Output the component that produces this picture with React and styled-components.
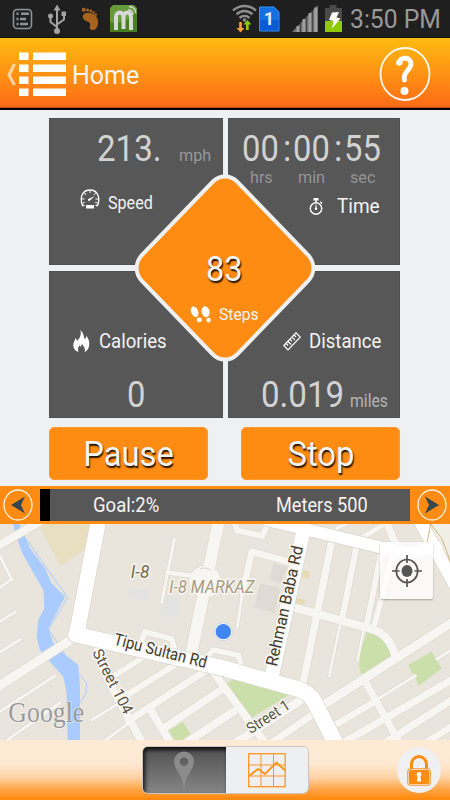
import React from 'react';
import styled, { createGlobalStyle, css } from 'styled-components';

const GlobalStyle = createGlobalStyle`
  * {
    box-sizing: border-box;
  }

  body {
    margin: 0;
    background: #eff0f2;
    overflow: hidden;
  }

  svg {
    display: block;
    flex: none;
  }
`;

const Screen = styled.div`
  width: 450px;
  height: 800px;
  display: flex;
  flex-direction: column;
  overflow: hidden;
  background: #eff0f2;
  font-family: Roboto, 'Liberation Sans', sans-serif;
`;

// Text in a box of known width, squeezed a little like the device font
const Label = styled.span`
  display: block;
  flex: none;
  width: ${p => p.$w}px;
  margin-left: ${p => p.$ml || 0}px;
  padding-top: ${p => p.$pt || 0}px;
  font-size: ${p => p.$size}px;
  color: ${p => p.$color || '#f4f4f4'};
  white-space: nowrap;
  transform: scaleX(${p => p.$sx || 0.95});
  transform-origin: left center;
  ${p => p.$shadow && css`
    text-shadow: 1px 2px 1.5px rgba(0, 0, 0, 0.9);
  `}
`;

const Row = styled.div`
  display: flex;
  align-items: ${p => p.$align || 'center'};
  height: ${p => p.$h}px;
  line-height: ${p => p.$h}px;
  margin-top: ${p => p.$mt || 0}px;
  padding-left: ${p => p.$pl || 0}px;
`;

const StatusBar = styled.div`
  height: 38px;
  flex: none;
  display: flex;
  align-items: center;
  justify-content: space-between;
  background: #1f1f1f;
  border-bottom: 1px solid #111;
  padding: 0 7px 0 12px;
`;

const StatusSide = styled.div`
  display: flex;
  align-items: center;
  line-height: 38px;
`;

const Header = styled.header`
  height: 72px;
  flex: none;
  display: flex;
  align-items: center;
  justify-content: space-between;
  padding: 1px 18px 0 6px;
  background: linear-gradient(#febb12, #fe6a16);
  border-bottom: 2px solid #000;
  box-shadow: inset 0 -1px 0 #c24e0d;
`;

const HeaderLeft = styled.div`
  display: flex;
  align-items: center;
  line-height: 32px;
`;

const Main = styled.main`
  flex: none;
  height: 376px;
  padding: 8px 50px 0 49px;
  background: #eff0f2;
`;

const Panel = styled.section`
  position: relative;
  height: 300px;
  display: grid;
  grid-template-columns: 174px 172px;
  grid-template-rows: 147px 147px;
  gap: 6px 5px;
`;

const Cell = styled.div`
  background: #575757;
  box-shadow: inset 0 0 0 1px #505050;
`;

const Diamond = styled.div`
  position: absolute;
  left: 50%;
  top: 50%;
  width: 144px;
  height: 144px;
  margin: -72px 0 0 -72px;
  background: #ff8c12;
  border: 4.5px solid #eff0f2;
  border-radius: 20px;
  transform: scaleX(0.965) rotate(45deg);
`;

const Steps = styled.div`
  position: absolute;
  left: 89px;
  top: 60px;
  width: 174px;
`;

const Buttons = styled.div`
  display: flex;
  justify-content: space-between;
  margin-top: 9px;
`;

const Button = styled.button`
  width: 159px;
  height: 53px;
  padding: 1px 0 0 ${p => p.$pl}px;
  display: flex;
  align-items: center;
  border: 1px solid #ff9a30;
  border-radius: 5px;
  background: #ff8c12;
  font-family: inherit;
  line-height: 50px;
`;

const GoalBar = styled.div`
  flex: none;
  height: 38px;
  display: flex;
  align-items: center;
  justify-content: space-between;
  padding: 0 3px;
  background: #ff8c12;
`;

const Track = styled.div`
  width: 370px;
  height: 32px;
  display: flex;
  align-items: center;
  line-height: 35px;
  background: #575757;
`;

const Progress = styled.div`
  width: 10px;
  height: 32px;
  background: #000;
`;

const MapArea = styled.div`
  position: relative;
  flex: none;
  height: 216px;
  overflow: hidden;
`;

const Locate = styled.button`
  position: absolute;
  left: 380px;
  top: 18px;
  width: 53px;
  height: 57px;
  display: flex;
  align-items: center;
  justify-content: center;
  padding: 0;
  border: 0;
  border-radius: 2px;
  background: rgba(255, 255, 255, 0.76);
  box-shadow: 0 1px 2px rgba(0, 0, 0, 0.3);
`;

const Footer = styled.footer`
  flex: none;
  height: 60px;
  display: flex;
  align-items: center;
  padding: 0 9px 0 142px;
  justify-content: space-between;
  background: linear-gradient(#feead6 0%, #fee8d2 40%, #fed3a6 62%, #ffa64a 82%, #ff8c12 97%);
`;

const Segments = styled.div`
  display: flex;
  width: 167px;
  height: 48px;
  border: 1px solid #c9c5c2;
  border-radius: 6px;
  overflow: hidden;
`;

const Segment = styled.div`
  width: 83px;
  height: 100%;
  display: flex;
  align-items: center;
  justify-content: center;
  background: #eeeff1;
  ${p => p.$active && css`
    background: linear-gradient(#505050, #858585);
    box-shadow: inset 2px 3px 4px rgba(0, 0, 0, 0.85);
  `}
`;

const LockButton = styled.div`
  width: 44px;
  height: 46px;
  border-radius: 50%;
  display: flex;
  align-items: center;
  justify-content: center;
  background: #eff0f2;
`;

const StatusIcons = () => (
  <svg width="130" height="37" viewBox="0 0 130 37">
    <g fill="none" stroke="#8f9294" strokeWidth="1.6">
      <rect x="1.5" y="9.5" width="18" height="19" rx="3.5" />
      <path d="M4.5 13.8h2M9 13.8h8M4.5 19h2M8 19h6M4.5 24h2M8 24h8" strokeWidth="2.6" />
    </g>
    <g stroke="#a3a3a3" fill="#a3a3a3">
      <path d="M45 10v22M38.5 17v5l6.5 5M52 15v4.5l-7 5" fill="none" strokeWidth="2" />
      <path d="M45 4.5l3.5 6h-7z" stroke="none" />
      <circle cx="38.5" cy="16" r="2.5" stroke="none" />
      <rect x="49.5" y="11.5" width="4.5" height="4.5" stroke="none" />
      <circle cx="45" cy="31" r="3" stroke="none" />
    </g>
    <g fill="#a8641f">
      <path d="M71 15.5C72 12 77 12 81 14c4 2 5 5 5 8 0 5-2 8-5 8-3 0-4-2-3-4 1-3-1-4-4-5-2-1-4-3-3-5.5z" />
      <circle cx="71.7" cy="9.7" r="2" />
      <circle cx="75.5" cy="10" r="1.5" />
      <circle cx="78.7" cy="11" r="1.4" />
      <circle cx="81.5" cy="12.5" r="1.3" />
      <circle cx="83.8" cy="14.5" r="1.2" />
    </g>
    <path d="M101 5h21l3 3v24h-27V8z" fill="#659b3b" />
    <path d="M98 22c10 3 20-2 27-12v22H98z" fill="#477f22" />
    <path d="M104 30V17c0-6 7.5-6 7.5 0v12M111.5 17c0-6 7.5-6 7.5 0v13" fill="none" stroke="#d8d8d8" strokeWidth="4" />
    <path d="M116 10c3 0 5 2 5 5M117 6.5c4 0 7 3 7 7" fill="none" stroke="#d8d8d8" strokeWidth="1.3" />
  </svg>
);

const SignalIcons = () => (
  <svg width="112" height="37" viewBox="0 0 112 37">
    <g fill="none" stroke="#8d8d8d" strokeWidth="2.5">
      <path d="M1 10.5c7-6 16-6 23 0M4.5 14.3c5-4.3 11-4.3 16 0M7.5 18c3-2.7 7-2.7 10 0" />
    </g>
    <circle cx="12.5" cy="20" r="1.8" fill="#8d8d8d" />
    <path d="M7.2 22h2.6v6h2.7l-4 4.5-4-4.5h2.7z" fill="#f9a13a" />
    <path d="M14 30v-5.5h-2.6l4-4.5 4 4.5h-2.7V30z" fill="#8cc90d" />
    <path d="M27.5 7H42l5 5v19H27.5z" fill="#1470e0" stroke="#3590f5" strokeWidth="1" />
    <path d="M28 20h18.5v10.5H28z" fill="#0c59d6" />
    <text x="31.7" y="25" fontSize="18" fontWeight="700" fill="#e4ecfa" fontFamily="Roboto">1</text>
    <path d="M60 32L86 5v27z" fill="#707070" />
    <path d="M66 26v6M72 19v13M78 13v19M83.7 7.5V32" stroke="#a0a0a0" strokeWidth="3" />
    <path d="M68.3 22v10M74.3 16v16M80.3 10v22" stroke="#3a3a3a" strokeWidth="1" />
    <path d="M93 8h4.5V5h7v3h5.5v13H93z" fill="#4a4a4a" />
    <path d="M93 21h17v11H93z" fill="#8fc905" />
    <path d="M100 12.5l7-.5-2.5 5.5 4 1-8.5 10 1.5-7.5-4.5-1z" fill="#fff" />
  </svg>
);

const MenuIcon = () => (
  <svg width="62" height="48" viewBox="0 0 62 48">
    <path d="M8.500 14L3 25l5.500 10" fill="none" stroke="#fff" strokeOpacity=".6" strokeWidth="3.2" />
    <g fill="#fff">
      {[2.5, 14.5, 26.5, 38.5].map(y => (
        <React.Fragment key={y}>
          <rect x="13" y={y} width="9.5" height="7.5" />
          <rect x="27" y={y} width="33" height="7.5" />
        </React.Fragment>
      ))}
    </g>
  </svg>
);

const HelpIcon = () => (
  <svg width="54" height="56" viewBox="0 0 54 56">
    <ellipse cx="27" cy="28" rx="24.5" ry="26" fill="none" stroke="#fff" strokeOpacity=".93" strokeWidth="1.8" />
    <path d="M20.5 17c3-7 12.5-6 12.5 1 0 6-9 8-6.500 16" fill="none" stroke="#fff" strokeWidth="4.8" strokeLinecap="round" />
    <circle cx="21.5" cy="16.5" r="3" fill="#fff" />
    <circle cx="26.5" cy="45" r="4" fill="#fff" />
  </svg>
);

const SpeedIcon = () => (
  <svg width="20" height="20" viewBox="0 0 20 20">
    <path d="M4.5 16.5H2.5C-.5 9 2 1 10 1s10.5 8 7.5 15.5h-2" fill="none" stroke="#fff" strokeWidth="1.3" />
    <path d="M2 10h2.5M18 10h-2.5M4.5 4l1.5 2M10 1.5V4M15.5 4L14 6M2.7 14l2-.7M17.3 14l-2-.7" stroke="#fff" strokeWidth="1" />
    <path d="M15 7l-6 5.2c-1-.5-1.4-1.4-.8-2.2z" fill="#fff" />
    <rect x="6" y="16" width="8" height="3.5" fill="#fff" />
  </svg>
);

const TimerIcon = () => (
  <svg width="14" height="19" viewBox="0 0 14 19">
    <circle cx="7" cy="11.5" r="5.7" fill="none" stroke="#fff" strokeWidth="1.5" />
    <path d="M4.5 1h5v2.5h-5zM6.3 3h1.4v3H6.3zM6.5 7.5h1v3.5h-1z" fill="#fff" />
    <circle cx="7" cy="11.8" r="1.3" fill="#fff" />
    <path d="M11.3 4.8l1.7 1.6" stroke="#fff" strokeWidth="1.4" />
  </svg>
);

const FlameIcon = () => (
  <svg width="17" height="23" viewBox="0 0 17 23">
    <path d="M7 0c5 4 3 7 5 9 1-1 1.3-2 1.3-3.5C16 9 17 13 15.8 17c-.7 2.4-2 4-4.3 5 1.5-4-1-5-2.5-8.5-.3 1.5-1 2.5-1 3.5-.7-.5-1-1.2-1-2C5 17 4.5 19.5 5.5 22 2 21 .5 18.5.3 15.5.2 12 2 10.5 2.5 8c1 .8 1.3 1.8 1.3 3C7 8.500 9 4 7 0z" fill="#fff" />
  </svg>
);

const RulerIcon = () => (
  <svg width="18" height="19" viewBox="0 0 18 19">
    <path d="M.8 13.5L13 .8l4.3 4.4L5 18z" fill="none" stroke="#fff" strokeWidth="1.2" />
    <path d="M3 11.5l2 2M5 9.5l3 3M7 7.3l2 2M9 5.2l3 3M11 3l2 2" stroke="#fff" strokeWidth="1.2" />
  </svg>
);

const FeetIcon = () => (
  <svg width="22" height="17" viewBox="0 0 22 17" fill="#fff">
    <ellipse cx="4.6" cy="5.7" rx="3.5" ry="5.5" transform="rotate(-22 4.6 5.7)" />
    <ellipse cx="9.3" cy="13.8" rx="2.6" ry="2.4" />
    <ellipse cx="15.6" cy="5.7" rx="3.9" ry="5.5" transform="rotate(-14 15.6 5.7)" />
    <ellipse cx="18.6" cy="14" rx="2.2" ry="2.5" />
  </svg>
);

const Arrow = ({ flip }) => (
  <svg width="30" height="32" viewBox="0 0 30 32">
    <ellipse cx="15" cy="16" rx="14" ry="15" fill="none" stroke="#fff" strokeOpacity=".9" strokeWidth="1.3" />
    <path
      d="M8 16L22 7.5 18 16l4 8.5z"
      fill="#37474f"
      transform={flip ? 'translate(30 0) scale(-1 1)' : undefined}
    />
  </svg>
);

const PinIcon = () => (
  <svg width="22" height="38" viewBox="0 0 22 38">
    <path fillRule="evenodd" d="M11 .5a10 10 0 0 1 10 10C21 19 12.5 23 11.5 37h-1C9.5 23 1 19 1 10.5a10 10 0 0 1 10-10zM11 6.5a4.200 4.200 0 1 0 0 8.400 4.200 4.200 0 0 0 0-8.400z" fill="#8b8b8b" />
  </svg>
);

const ChartIcon = () => (
  <svg width="38" height="35" viewBox="0 0 38 35" fill="none" stroke="#ff9420">
    <rect x=".7" y=".7" width="36.5" height="33" strokeWidth="1.3" />
    <path d="M13 1v33M25.5 1v33M1 12h36M1 23h36" strokeWidth="1" />
    <path d="M1 23l9-7 7 5L28.5 9.5l8.5 8" strokeWidth="1.9" />
  </svg>
);

const LockIcon = () => (
  <svg width="24" height="31" viewBox="0 0 24 31">
    <path d="M4.5 15V9.5a7.5 8 0 0 1 15 0V15" fill="none" stroke="#ff8c12" strokeWidth="3" />
    <rect x=".8" y="13.8" width="22.4" height="16.4" rx="2" fill="#eff0f2" stroke="#ff8c12" strokeWidth="1" />
    <rect x="2" y="15" width="20" height="14" rx="1" fill="#ff8c12" />
    <circle cx="12" cy="19.5" r="2.4" fill="#fff" />
    <path d="M11 20h2l1.2 6.5H9.8z" fill="#fff" />
  </svg>
);

// Each street: path, width
const STREETS = [
  ['M-10 80L118 6', 24],
  ['M-10 502L215 358', 28],
  ['M-5 100L36 180', 9],
  ['M36 177L-5 206', 9],
  ['M-5 308L46 275', 9],
  ['M-5 400L62 358', 9],
  ['M-5 578L165 467', 9],
  ['M15 665L180 548', 9],
  ['M290 360Q296 430 345 520L428 670', 24],
  ['M325 478L445 402', 17],
  ['M362 537L545 422', 19],
  ['M275 600L370 542', 9],
  ['M385 603L620 450', 22],
  ['M312 664L392 605', 9],
  ['M495 622L665 508', 22],
  ['M560 668L700 575', 24],
  ['M452 570L512 670', 24],
  ['M635 450L798 672', 24],
  ['M657 0L575 395', 36],
  ['M523 58L485 248', 9],
  ['M502 157L580 168', 14],
  ['M422 370L435 335L515 357L522 382', 17],
  ['M622 410L640 390L715 406L722 430', 17],
  ['M702 6L713 32L787 48L805 8', 18],
  ['M865 125L755 95L728 218', 20],
  ['M728 215L712 320', 9],
  ['M997 55L908 495', 22],
  ['M1070 75L1026 300', 19],
  ['M1021 310L988 467', 8],
  ['M1145 90L1100 315', 18],
  ['M1092 325L1072 422', 8],
  ['M1180 95L1125 310', 18],
  ['M880 262L1115 327Q1166 342 1185 402', 25],
  ['M1080 57L1160 8', 15],
  ['M1160 8L1187 72', 22],
  ['M1010 25L1060 0', 12],
  ['M965 558L1355 308', 27],
  ['M690 680L900 542', 26],
  ['M815 668L955 572', 22],
  ['M1000 618L1130 542', 20],
  ['M1120 545L1246 467', 9],
  ['M1310 417L1355 390', 9],
  ['M1035 665L1355 480', 22],
  ['M1150 672L1355 540', 22],
  ['M1270 672L1355 620', 20],
  ['M1098 488L1198 668', 22],
];

const AVENUES = [
  ['M296 0L230 342', 46],
  ['M228 344L675 446L890 506Q925 515 943 545L1008 672', 47],
  ['M800 0L1150 84L1230 100L1310 80', 36],
  ['M1258 0L1365 195', 38],
  ['M912 25L817 462', 42],
];

const GREENS = [
  'M680 492L700 478L875 520L735 605z',
  'M1100 336L1145 345L1162 365L1172 412L1087 468L1077 440L1081 395z',
  'M1225 435L1295 395L1325 445L1257 497z',
  'M507 632L548 605L572 642L545 662H525z',
];

const MAP_LABELS = [
  { text: 'I-8', x: 392, y: 174, w: 56, size: 55, color: '#77694a', italic: true },
  { text: 'I-8 MARKAZ', x: 508, y: 220, w: 255, size: 55, color: '#aa9b80', italic: true },
  { text: 'Tipu Sultan Rd', x: 339, y: 373, w: 286, size: 50, color: '#443c2c', rotate: 14.5 },
  { text: 'Street 104', x: 276, y: 397, w: 212, size: 46, color: '#5b5444', rotate: 63 },
  { text: 'Rehman Baba Rd', x: 830, y: 441, w: 368, size: 49, color: '#443c2c', rotate: -77.5 },
  { text: 'Street 1', x: 752, y: 643, w: 145, size: 46, color: '#5b5444', rotate: -33 },
];

const StreetMap = () => (
  <svg width="450" height="216" viewBox="0 12 1350 648">
    <rect x="0" y="12" width="1350" height="648" fill="#e9e5dd" />
    <path d="M1285 12H1350V140z" fill="#f1eee6" />
    <path d="M118 12H275L258 88L182 138L140 60z" fill="#e8dfc0" />
    <path d="M388 203L447 212L440 242L383 232zM490 225L538 232L530 292L480 285z" fill="#e3e3e2" />
    <path d="M780 190L840 205L825 280L763 262zM820 130L860 140L845 190L810 180z" fill="#dfdbd4" />
    <path d="M910 150L930 155L925 178L905 172zM892 235L915 240L912 255L888 250z" fill="#e8dbb2" />
    {GREENS.map(d => <path key={d} d={d} fill="#cadfaa" />)}
    <path
      d="M40 12H60L62 40L75 50L90 85L135 145L155 190L195 230L145 325L160 370L190 400L235 435L240 500V660H203L200 520L190 470L150 425L120 390L110 350L115 300L133 265L130 210L95 150L65 95L42 25z"
      fill="#a9cbff"
    />
    <path d="M70 45L203 233L145 328L195 402M240 465L260 490L258 520L240 550" fill="none" stroke="#a9cbff" strokeWidth="3" />
    <g fill="none" strokeLinecap="round" strokeLinejoin="round">
      {STREETS.map(([d, w]) => <path key={d} d={d} stroke="#dad5c9" strokeWidth={w + 3} />)}
      <circle cx="615" cy="185" r="50" fill="#dad5c9" />
      {STREETS.map(([d, w]) => <path key={d} d={d} stroke="#f7f6f2" strokeWidth={w} />)}
      <circle cx="615" cy="185" r="48" fill="#f7f6f2" />
      <path d="M600 148Q615 138 632 150" stroke="#dad5c9" strokeWidth="3" />
      {AVENUES.map(([d, w]) => <path key={d} d={d} stroke="#dad5c9" strokeWidth={w + 4} />)}
      {AVENUES.map(([d, w]) => <path key={d} d={d} stroke="#fff" strokeWidth={w} />)}
      <path d="M1292 12L1281 70M1292 12L1325 55Q1340 90 1352 130" stroke="#cdb988" strokeWidth="3" />
    </g>
    <g fontFamily="Roboto, sans-serif" stroke="#f7f6f2" strokeWidth="9" strokeLinejoin="round" paintOrder="stroke">
      {MAP_LABELS.map(l => (
        <text
          key={l.text}
          transform={`translate(${l.x} ${l.y}) rotate(${l.rotate || 0})`}
          fontSize={l.size}
          fontStyle={l.italic ? 'italic' : 'normal'}
          fill={l.color}
          textLength={l.w}
          lengthAdjust="spacingAndGlyphs"
        >
          {l.text}
        </text>
      ))}
    </g>
    <circle cx="670" cy="335" r="27" fill="#fff" stroke="#b9c6dd" strokeWidth="2" />
    <circle cx="670" cy="335" r="23" fill="#4285f4" />
    <text
      x="25"
      y="605"
      fontFamily="'Liberation Serif', serif"
      fontSize="88"
      fill="#8f8f8f"
      fillOpacity=".9"
      stroke="#fff"
      strokeOpacity=".5"
      strokeWidth="5"
      paintOrder="stroke"
      textLength="228"
      lengthAdjust="spacingAndGlyphs"
    >
      Google
    </text>
  </svg>
);

const LocateIcon = () => (
  <svg width="30" height="32" viewBox="0 0 30 32" fill="none" stroke="#555">
    <ellipse cx="15" cy="16" rx="10.7" ry="11.5" strokeWidth="1.7" />
    <ellipse cx="15" cy="16" rx="5.5" ry="6" fill="#555" stroke="none" />
    <path d="M15 0v8M15 24v8M0 16h7.5M22.5 16H30" strokeWidth="1.7" />
  </svg>
);

const App = () => {
  return (
    <Screen>
      <GlobalStyle />
      <StatusBar>
        <StatusIcons />
        <StatusSide>
          <SignalIcons />
          <Label $size={26} $w={93} $ml={6} $sx={0.95} $color="#999">3:50 PM</Label>
        </StatusSide>
      </StatusBar>

      <Header>
        <HeaderLeft>
          <MenuIcon />
          <Label $size={25} $w={80} $ml={4} $pt={4} $sx={1}>Home</Label>
        </HeaderLeft>
        <HelpIcon />
      </Header>

      <Main>
        <Panel>
          <Cell>
            <Row $h={40} $mt={11} $pl={48} $align="baseline">
              <Label $size={36} $w={82} $sx={0.92} $color="#d2d2d2">213.</Label>
              <Label $size={17} $w={34} $color="#999">mph</Label>
            </Row>
            <Row $h={20} $mt={20} $pl={31}>
              <SpeedIcon />
              <Label $size={17.5} $w={60} $ml={8} $pt={8} $sx={0.92}>Speed</Label>
            </Row>
          </Cell>
          <Cell>
            <Row $h={38} $mt={12} $pl={14}>
              <Label $size={36} $w={41} $sx={0.91} $color="#d2d2d2">00</Label>
              <Label $size={36} $w={10} $color="#d2d2d2">:</Label>
              <Label $size={36} $w={41} $sx={0.91} $color="#d2d2d2">00</Label>
              <Label $size={36} $w={10} $color="#d2d2d2">:</Label>
              <Label $size={36} $w={41} $sx={0.91} $color="#d2d2d2">55</Label>
            </Row>
            <Row $h={18} $pl={22}>
              <Label $size={17} $w={48} $color="#959595">hrs</Label>
              <Label $size={17} $w={52} $color="#959595">min</Label>
              <Label $size={17} $w={30} $color="#959595">sec</Label>
            </Row>
            <Row $h={24} $mt={8} $pl={81}>
              <TimerIcon />
              <Label $size={20} $w={50} $ml={14}>Time</Label>
            </Row>
          </Cell>
          <Cell>
            <Row $h={26} $mt={57} $pl={24}>
              <FlameIcon />
              <Label $size={20} $w={80} $ml={9} $sx={0.93}>Calories</Label>
            </Row>
            <Row $h={40} $mt={21} $pl={78}>
              <Label $size={36} $w={30} $sx={0.91} $color="#d2d2d2">0</Label>
            </Row>
          </Cell>
          <Cell>
            <Row $h={26} $mt={57} $pl={55}>
              <RulerIcon />
              <Label $size={20} $w={80} $ml={8} $sx={0.93}>Distance</Label>
            </Row>
            <Row $h={40} $mt={21} $pl={33} $align="baseline">
              <Label $size={36} $w={89} $sx={0.92} $color="#d2d2d2">0.019</Label>
              <Label $size={17.5} $w={44} $sx={0.9} $color="#b5b5b5">miles</Label>
            </Row>
          </Cell>
          <Diamond />
          <Steps>
            <Row $h={40} $mt={72} $pl={68}>
              <Label $size={35} $w={45} $sx={0.93} $shadow>83</Label>
            </Row>
            <Row $h={20} $mt={14} $pl={52}>
              <FeetIcon />
              <Label $size={17} $w={50} $ml={7} $sx={0.92}>Steps</Label>
            </Row>
          </Steps>
        </Panel>
        <Buttons>
          <Button $pl={31}>
            <Label $size={34.5} $w={100} $sx={0.95} $shadow>Pause</Label>
          </Button>
          <Button $pl={41}>
            <Label $size={34.5} $w={80} $shadow>Stop</Label>
          </Button>
        </Buttons>
      </Main>

      <GoalBar>
        <Arrow />
        <Track>
          <Progress />
          <Label $size={19.5} $w={183} $ml={43} $pt={1}>Goal:2%</Label>
          <Label $size={19.5} $w={100} $pt={1} $sx={0.93}>Meters 500</Label>
        </Track>
        <Arrow flip />
      </GoalBar>

      <MapArea>
        <StreetMap />
        <Locate>
          <LocateIcon />
        </Locate>
      </MapArea>

      <Footer>
        <Segments>
          <Segment $active>
            <PinIcon />
          </Segment>
          <Segment>
            <ChartIcon />
          </Segment>
        </Segments>
        <LockButton>
          <LockIcon />
        </LockButton>
      </Footer>
    </Screen>
  );
};

export default App;
